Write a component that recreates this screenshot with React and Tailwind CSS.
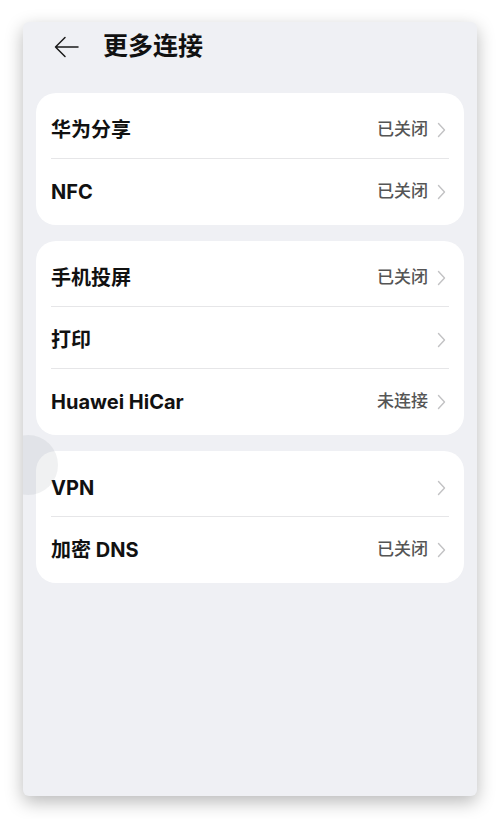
import React from 'react';

const GROUPS = [
  [
    { title: '华为分享', value: '已关闭' },
    { title: 'NFC', value: '已关闭' },
  ],
  [
    { title: '手机投屏', value: '已关闭' },
    { title: '打印', value: '' },
    { title: 'Huawei HiCar', value: '未连接' },
  ],
  [
    { title: 'VPN', value: '' },
    { title: '加密 DNS', value: '已关闭' },
  ],
];

const Chevron = () => (
  <svg width="9" height="16" viewBox="0 0 9 16" fill="none">
    <path d="M1.5 1.5 L7.5 8 L1.5 14.5" stroke="#c2c2c4" strokeWidth="1.4" strokeLinecap="round" strokeLinejoin="round" />
  </svg>
);

const BackArrow = () => (
  <svg width="25" height="22" viewBox="0 0 25 22" fill="none">
    <path d="M24 11 H1.5 M11 1.5 L1.5 11 L11 20.5" stroke="#1a1a1a" strokeWidth="1.5" strokeLinecap="round" strokeLinejoin="round" />
  </svg>
);

function Row({ item, last }) {
  return (
    <div className="relative h-[62px] flex items-center pt-[4px] pl-[15px] pr-[18px]">
      <span className="flex-1 text-[20px] font-bold text-[#111]">{item.title}</span>
      {item.value && <span className="text-[17px] font-medium text-[#555] mr-[9px]">{item.value}</span>}
      <Chevron />
      {!last && <div className="absolute bottom-0 left-[15px] right-[15px] h-px bg-[#e6e6e8]" />}
    </div>
  );
}

export default function App() {
  return (
    <div
      className="w-full h-[819px] bg-white pt-[22px] px-[23px]"
      style={{ fontFamily: 'Inter, "Noto Sans CJK SC", sans-serif' }}
    >
      <div className="relative h-[774px] bg-[#eff0f4] rounded-[6px] shadow-[0_6px_18px_rgba(0,0,0,0.28)] overflow-hidden">
        <div className="h-[50px] flex items-center pl-[31px]">
          <BackArrow />
          <span className="ml-[24px] text-[25px] font-bold text-[#111]">更多连接</span>
        </div>
        <div className="mt-[21px] px-[13px] flex flex-col gap-4">
          {GROUPS.map((group, gi) => (
            <div key={gi} className="bg-white rounded-[20px] py-1">
              {group.map((item, i) => (
                <Row key={item.title} item={item} last={i === group.length - 1} />
              ))}
            </div>
          ))}
        </div>
        <div className="absolute left-[-25px] top-[413px] w-[60px] h-[60px] rounded-full bg-[rgba(110,115,130,0.1)]" />
      </div>
    </div>
  );
}
